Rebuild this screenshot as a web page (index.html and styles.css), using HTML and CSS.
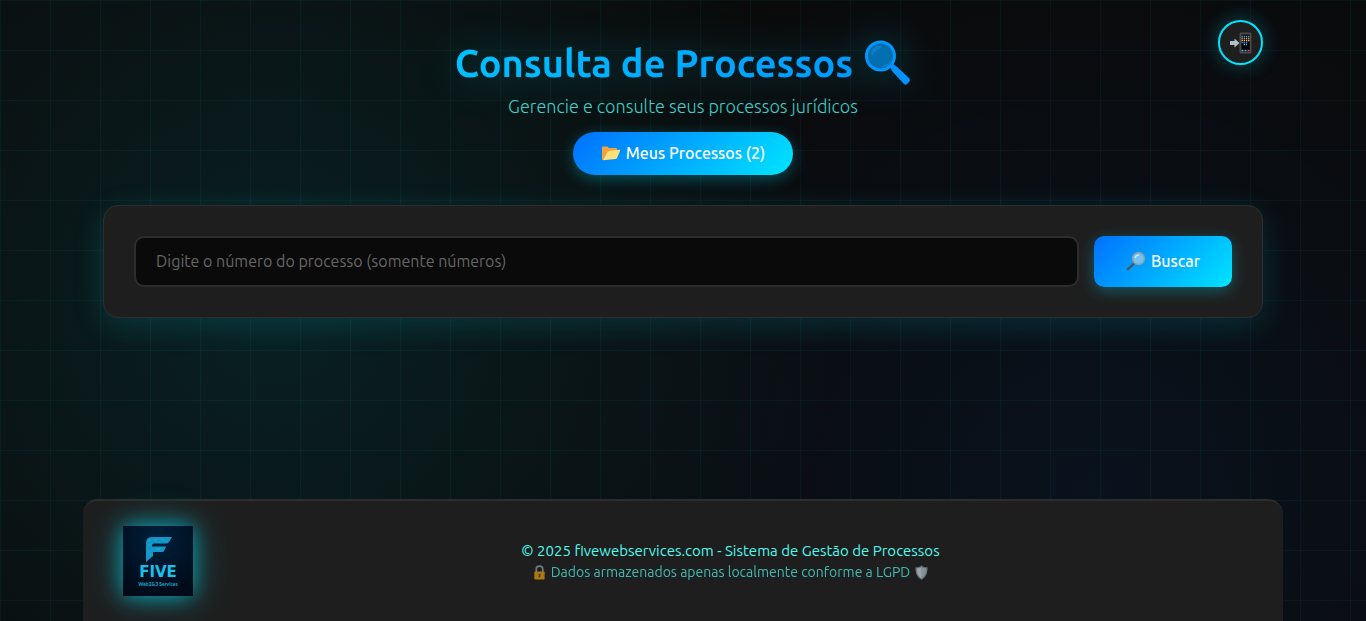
FILE: index.html
```html
<!DOCTYPE html>
<html lang="pt-BR">
<head>
<meta charset="utf-8">
<meta name="viewport" content="width=device-width, initial-scale=1">
<title>Consulta de Processos</title>
<link rel="stylesheet" href="styles.css">
</head>
<body>
<div class="page">
  <header class="header">
    <h1 class="title"><span class="title-text">Consulta de Processos</span>
      <svg class="title-icon" viewBox="0 0 46 46" aria-hidden="true">
        <circle cx="15.500" cy="16" r="14" fill="#0074b8" stroke="#0097ff" stroke-width="3"/>
        <circle cx="15.500" cy="16" r="12" fill="#0070b0" stroke="#0069a8" stroke-width="1"/>
        <path d="M6 13 C7 8 12 5 16 6 C17 8 10 10 8 15 C7 16 6 15 6 13Z" fill="#087fca"/>
        <path d="M17 26 C21 25 24 23 26 20 C26 24 22 27 18 27Z" fill="#087fca"/>
        <path d="M25 27 L28 24 L31 26 L44 38 Q46 40 44 42 L42 44 Q40 46 38 43 L27 31Z" fill="#0092ff"/>
      </svg>
    </h1>
    <p class="subtitle">Gerencie e consulte seus processos jurídicos</p>
    <button class="btn btn-list" type="button">
      <svg class="icon-folder" viewBox="0 0 20 16" aria-hidden="true">
        <path d="M1 2.500 Q1 1.500 2 1.500 H6.500 L8 3 H15 Q16 3 16 4 V6 L3 15 H2 Q1 15 1 14Z" fill="#f2a33c"/>
        <path d="M6.500 7 Q7 6.200 8 6 L18.500 4.800 Q19.500 4.800 19 6 L16 13 Q15.500 14 14.500 14 L2 15.200Z" fill="#ffe07a"/>
      </svg>
      Meus Processos (2)
    </button>
    <button class="install" type="button" aria-label="Instalar aplicativo">
      <svg class="icon-phone" viewBox="0 0 22 22" aria-hidden="true">
        <path d="M0 9 H4.500 V6.500 L9.500 11 L4.500 15.500 V13 H0Z" fill="#b0bec5"/>
        <rect x="9.500" y=".5" width="12" height="21" rx="1.500" fill="#4a4a4a"/>
        <rect x="11.300" y="2.500" width="8.500" height="17" fill="#050505"/>
        <g stroke-width="1.400" stroke-dasharray="1.400 .8">
          <path d="M11.500 4.500H20" stroke="#35a8e8"/>
          <path d="M11.500 6.500H20" stroke="#f08a35"/>
          <path d="M11.500 8.500H20" stroke="#d9c08a"/>
          <path d="M11.500 10.500H18" stroke="#3d8be0"/>
          <path d="M13.700 12.500H17" stroke="#4fc3f7"/>
        </g>
        <path d="M11.500 18.500H13.500" stroke="#26c6da" stroke-width="1.400"/>
        <path d="M14.500 18.500H16.500" stroke="#5c9ded" stroke-width="1.400"/>
        <path d="M17.500 18.500H19.500" stroke="#e0456b" stroke-width="1.400"/>
      </svg>
    </button>
  </header>

  <main>
    <form class="search">
      <input class="search-input" type="text" inputmode="numeric" aria-label="Número do processo" placeholder="Digite o número do processo (somente números)">
      <button class="btn btn-search" type="button">
        <svg class="icon-search" viewBox="0 0 20 20" aria-hidden="true">
          <path d="M7.500 11.500 L9 13 L2.800 19 Q1.800 19.800 1 19 Q.4 18 1.200 17.200Z" fill="#4d5559"/>
          <path d="M8 11 L9.500 12.500" stroke="#9aa7ad" stroke-width="1.500"/>
          <circle cx="12.500" cy="7.500" r="6" fill="#6fc4f3" stroke="#8d9ca5" stroke-width="1.500"/>
          <path d="M9 7 C9.500 5 11 3.800 13 4" fill="none" stroke="#c9ecfd" stroke-width="1.500"/>
        </svg>
        Buscar
      </button>
    </form>
  </main>

  <footer class="footer">
    <svg class="logo" viewBox="0 0 70 70" role="img" aria-label="Five Web2&amp;3 Services">
      <defs>
        <radialGradient id="logo-bg" cx=".5" cy=".2" r=".8">
          <stop offset="0" stop-color="#00203c"/>
          <stop offset="1" stop-color="#000a18"/>
        </radialGradient>
        <linearGradient id="logo-mark" x1="0" y1="0" x2="1" y2="1">
          <stop offset="0" stop-color="#1093c4"/>
          <stop offset=".6" stop-color="#1399cc"/>
          <stop offset="1" stop-color="#075c8c"/>
        </linearGradient>
      </defs>
      <rect width="70" height="70" fill="url(#logo-bg)"/>
      <path d="M23 17 Q23 11 29 11 H49 L46 16 Q45 17.500 43 17.500 H31 Q29 17.500 29 19.500 V20.500 H43 L41 25 Q40.500 26 39 26 H30 V30 L23 36Z" fill="url(#logo-mark)"/>
      <path d="M25 15 L28 13 M25 20 L27 18 M26 25 V29 M31 14 H34 M38 13 L42 15 M33 23 H37" stroke="#3fc1e4" stroke-width=".7" fill="none" opacity=".6"/>
      <text class="logo-name" x="35" y="51" text-anchor="middle">FIVE</text>
      <text class="logo-tag" x="35" y="60" text-anchor="middle">Web2&amp;3 Services</text>
    </svg>
    <div class="footer-text">
      <p class="copyright">© 2025 fivewebservices.com - Sistema de Gestão de Processos</p>
      <p class="privacy">
        <svg class="icon-small" viewBox="0 0 16 16" aria-hidden="true">
          <path d="M4.500 8 V4.500 Q4.500 1.200 8 1.200 T11.500 4.500 V8" fill="none" stroke="#90a4ae" stroke-width="1.800"/>
          <rect x="2.500" y="7" width="11" height="8.500" rx="1" fill="#e6a00c"/>
          <path d="M8 9.500 V13" stroke="#54400f" stroke-width="1.800"/>
        </svg>
        Dados armazenados apenas localmente conforme a LGPD
        <svg class="icon-small" viewBox="0 0 16 16" aria-hidden="true">
          <path d="M8 .5 C10 2 12 2.500 14.500 2.500 C14.500 9 13 13 8 15.800 C3 13 1.500 9 1.500 2.500 C4 2.500 6 2 8 .5Z" fill="#8297a2"/>
          <path d="M8 2.200 C9.600 3.300 11 3.700 13 3.800 C12.800 9 11.500 12 8 14.300Z" fill="#b4c2c9"/>
          <path d="M8 2.200 C6.400 3.300 5 3.700 3 3.800 C3.200 9 4.500 12 8 14.300Z" fill="#d3dde1"/>
        </svg>
      </p>
    </div>
  </footer>
</div>
</body>
</html>
```

FILE: styles.css
```css
:root {
  --cyan: #00e5ff;
  --blue: #0070ff;
  --panel: #1e1e1e;
  --line: #2d2d2d;
}

* {
  box-sizing: border-box;
}

body {
  margin: 0;
  color: #fff;
  background-color: #0a0a0a;
  background-image:
    linear-gradient(rgba(0, 229, 255, 0.05) 1px, transparent 1px),
    linear-gradient(90deg, rgba(0, 229, 255, 0.05) 1px, transparent 1px),
    radial-gradient(circle at 20% 50%, rgba(0, 229, 255, 0.1), transparent 50%),
    radial-gradient(circle at 80% 80%, rgba(0, 112, 255, 0.08), transparent 50%);
  background-size: 50px 50px, 50px 50px, auto, auto;
  font-family: Ubuntu, "Noto Sans", sans-serif;
}

.page {
  display: flex;
  flex-direction: column;
  min-height: 100vh;
  max-width: 1200px;
  margin: 0 auto;
  padding-top: 20px;
}

.header {
  position: relative;
  display: flex;
  flex-direction: column;
  align-items: center;
  margin: 0 20px;
  padding-top: 16px;
}

.title {
  display: flex;
  align-items: center;
  justify-content: center;
  gap: 12px;
  width: 100%;
  margin: 0;
  font-size: 38px;
  font-weight: 600;
  line-height: 54px;
  color: transparent;
  background: linear-gradient(135deg, var(--cyan), var(--blue));
  background-clip: text;
  -webkit-background-clip: text;
  filter: drop-shadow(0 0 20px rgba(0, 229, 255, 0.3));
}

.title-icon {
  width: 46px;
  height: 46px;
}

.subtitle {
  margin: 3px 0 13px;
  font-size: 18px;
  font-weight: 300;
  line-height: 26px;
  color: #3fd0cb;
}

.btn {
  display: flex;
  align-items: center;
  justify-content: center;
  gap: 5px;
  border: 0;
  color: #fff;
  background: linear-gradient(135deg, var(--blue), var(--cyan));
  box-shadow: 0 4px 15px rgba(0, 229, 255, 0.3);
  font: inherit;
  font-size: 16px;
  font-weight: 500;
  cursor: pointer;
}

.btn-list {
  height: 43px;
  padding: 0 28px 2px;
  border-radius: 25px;
}

.icon-folder,
.icon-search {
  width: 20px;
  height: 20px;
}

.install {
  position: absolute;
  top: 0;
  right: 0;
  display: grid;
  place-items: center;
  width: 45px;
  height: 45px;
  padding: 0;
  border: 2px solid var(--cyan);
  border-radius: 50%;
  background: var(--panel);
  box-shadow: 0 0 20px rgba(0, 229, 255, 0.3);
  cursor: pointer;
}

.icon-phone {
  width: 22px;
  height: 22px;
}

.search {
  display: flex;
  gap: 15px;
  margin: 30px 20px;
  padding: 30px;
  border: 1px solid var(--line);
  border-radius: 15px;
  background: var(--panel);
  box-shadow: 0 8px 32px rgba(0, 229, 255, 0.15);
}

.search-input {
  flex: 1;
  min-width: 0;
  height: 51px;
  padding: 0 20px 2px;
  border: 2px solid var(--line);
  border-radius: 10px;
  color: #fff;
  background: #0a0a0a;
  font: inherit;
  font-size: 16px;
}

.search-input::placeholder {
  color: #666;
}

.btn-search {
  padding: 0 32px 2px;
  border-radius: 10px;
}

.footer {
  display: flex;
  align-items: center;
  gap: 25px;
  margin-top: auto;
  padding: 25px 40px;
  border-top: 2px solid var(--line);
  border-radius: 15px 15px 0 0;
  background: var(--panel);
}

.logo {
  flex: none;
  width: 70px;
  height: 70px;
  box-shadow: 0 0 20px rgba(0, 229, 255, 0.6), 0 0 40px rgba(0, 229, 255, 0.3);
}

.logo-name {
  fill: #18bfe8;
  font-family: "DejaVu Sans", sans-serif;
  font-size: 15px;
  font-weight: 700;
}

.logo-tag {
  fill: #17a9cf;
  font-family: Lato, sans-serif;
  font-size: 5px;
  font-weight: 700;
}

.footer-text {
  flex: 1;
  text-align: center;
}

.copyright,
.privacy {
  margin: 0;
  line-height: 22px;
}

.copyright {
  font-size: 15px;
  color: #4ffbf0;
}

.privacy {
  display: flex;
  align-items: center;
  justify-content: center;
  gap: 4px;
  font-size: 14px;
  line-height: 20px;
  color: #4ffbf0;
  opacity: 0.7;
}

.icon-small {
  width: 15px;
  height: 15px;
}
```
